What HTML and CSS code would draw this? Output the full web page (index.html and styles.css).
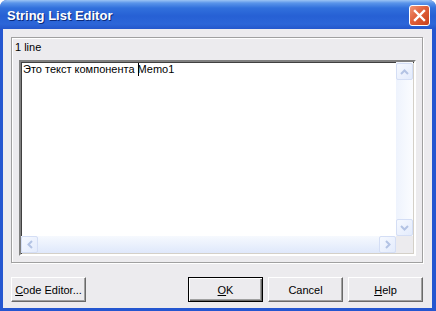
FILE: index.html
```html
<!DOCTYPE html>
<html lang="ru">
<head>
    <meta charset="UTF-8">
    <title>String List Editor</title>
    <link rel="stylesheet" href="styles.css">
</head>
<body>
    <div class="window">
        <div class="titlebar">
            <span class="title">String List Editor</span>
            <button class="close" title="Close">
                <svg width="13" height="13" viewBox="0 0 13 13">
                    <path d="M2 2 L11 11 M11 2 L2 11" stroke="#fff" stroke-width="2.4" stroke-linecap="square"/>
                </svg>
            </button>
        </div>

        <div class="client">
            <!-- Lines group -->
            <div class="group">
                <div class="group-label">1 line</div>
                <div class="memo">
                    <div class="memo-text">Это текст компонента <span class="caret"></span>Memo1</div>
                    <div class="vscroll">
                        <div class="sb-btn"><svg width="9" height="6" viewBox="0 0 9 6"><path d="M1 5 L4.5 1.5 L8 5" fill="none" stroke="#b3c3e4" stroke-width="2"/></svg></div>
                        <div class="sb-track-v"></div>
                        <div class="sb-btn"><svg width="9" height="6" viewBox="0 0 9 6"><path d="M1 1 L4.5 4.5 L8 1" fill="none" stroke="#b3c3e4" stroke-width="2"/></svg></div>
                    </div>
                    <div class="hscroll">
                        <div class="sb-btn"><svg width="6" height="9" viewBox="0 0 6 9"><path d="M5 1 L1.5 4.5 L5 8" fill="none" stroke="#b3c3e4" stroke-width="2"/></svg></div>
                        <div class="sb-track-h"></div>
                        <div class="sb-btn"><svg width="6" height="9" viewBox="0 0 6 9"><path d="M1 1 L4.5 4.5 L1 8" fill="none" stroke="#b3c3e4" stroke-width="2"/></svg></div>
                    </div>
                    <div class="sb-corner"></div>
                </div>
            </div>

            <!-- Buttons -->
            <div class="button-row">
                <button class="btn"><u>C</u>ode Editor...</button>
                <div class="spacer"></div>
                <button class="btn btn-default"><u>O</u>K</button>
                <button class="btn">Cancel</button>
                <button class="btn"><u>H</u>elp</button>
            </div>
        </div>
    </div>
</body>
</html>
```

FILE: styles.css
```css
/* Base */
body {
    margin: 0;
    padding: 0;
    background: #ffffff;
    font-family: "Liberation Sans", Arial, sans-serif;
    font-size: 11px;
    color: #000;
}
.window {
    width: 436px;
    height: 311px;
    display: flex;
    flex-direction: column;
    background: #2456d0;
    border-radius: 7px 7px 0 0;
    overflow: hidden;
}

/* Title bar */
.titlebar {
    height: 29px;
    flex: none;
    display: flex;
    align-items: center;
    padding: 0 6px 0 7px;
    background: linear-gradient(#9cc4f4 0, #5a95ea 3px, #3170dc 8px, #2660d4 16px, #2c66d8 24px, #2457cc 29px);
}
.title {
    flex: 1;
    color: #fff;
    font-weight: bold;
    font-size: 13px;
    text-shadow: 1px 1px 0 #0a2a7a;
    padding-top: 1px;
}
.close {
    width: 21px;
    height: 21px;
    padding: 0;
    margin-top: 2px;
    border: 1px solid #fff;
    border-radius: 3px;
    background: linear-gradient(135deg, #f09476 0%, #e0603a 45%, #c8401a 100%);
    display: flex;
    align-items: center;
    justify-content: center;
}

/* Client area */
.client {
    flex: 1;
    margin: 0 4px 3px 3px;
    background: #ecebee;
    display: flex;
    flex-direction: column;
    padding: 8px 9px 0 8px;
}
.group {
    height: 221px;
    border: 1px solid #a0a0a0;
    box-shadow: inset 1px 1px 0 #fff, 1px 1px 0 #fff;
    padding: 3px 6px 0 3px;
    display: flex;
    flex-direction: column;
}
.group-label {
    height: 13px;
    line-height: 13px;
    margin-bottom: 6px;
}

/* Memo */
.memo {
    margin-left: 4px;
    border: 2px solid;
    border-color: #808080 #ffffff #ffffff #808080;
    box-shadow: inset 1px 1px 0 #404040, inset -1px -1px 0 #d4d0c8;
    background: #fff;
    display: grid;
    grid-template-columns: 1fr 17px;
    grid-template-rows: 1fr 17px;
    padding: 0 1px 1px 0;
    width: 392px;
    height: 191px;
}
.memo-text {
    padding: 1px 0 0 2px;
    line-height: 13px;
    white-space: nowrap;
}
.caret {
    display: inline-block;
    width: 1px;
    height: 13px;
    background: #000;
    vertical-align: top;
    margin-right: -1px;
}
.vscroll {
    display: flex;
    flex-direction: column;
    background: linear-gradient(90deg, #eef3fd, #f6f9fe 60%, #fbfcff);
    padding-top: 1px;
}
.hscroll {
    display: flex;
    background: linear-gradient(#f6f9fe, #e8effc 60%, #dfe8fb);
}
.sb-track-v, .sb-track-h {
    flex: 1;
}
.sb-btn {
    width: 15px;
    height: 15px;
    flex: none;
    border: 1px solid #d4def5;
    border-radius: 2px;
    background: linear-gradient(135deg, #f6f9ff, #e3ebfc);
    display: flex;
    align-items: center;
    justify-content: center;
}
.sb-corner {
    background: #ecebee;
}

/* Buttons */
.button-row {
    display: flex;
    gap: 5px;
    margin-top: 14px;
}
.spacer {
    flex: 1;
}
.btn {
    width: 75px;
    height: 25px;
    padding: 0;
    font-family: "Liberation Sans", Arial, sans-serif;
    font-size: 11px;
    color: #000;
    background: #ecebee;
    border: 1px solid;
    border-color: #ffffff #696969 #696969 #ffffff;
    box-shadow: inset -1px -1px 0 #a0a0a0;
}
.btn-default {
    border: 1px solid #000;
    box-shadow: inset 1px 1px 0 #fff, inset -1px -1px 0 #696969, inset -2px -2px 0 #a0a0a0;
}
```
